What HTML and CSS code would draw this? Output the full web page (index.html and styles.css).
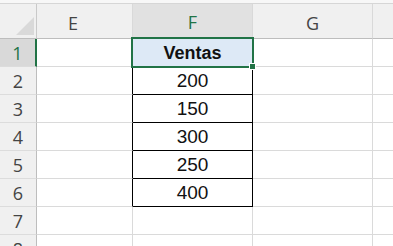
FILE: index.html
```html
<!DOCTYPE html>
<html lang="es">
<head>
<meta charset="utf-8">
<title>Hoja</title>
<link rel="stylesheet" href="styles.css">
</head>
<body>
<div class="sheet">
  <div class="topstrip"></div>

  <div class="corner"><span class="tri"></span></div>
  <div class="colhead colhead-e">E</div>
  <div class="colhead sel">F</div>
  <div class="colhead">G</div>
  <div class="colhead rest"></div>

  <div class="rowhead sel">1</div>
  <div class="cell"></div>
  <div class="cell active"><span class="bold">Ventas</span><span class="handle"></span></div>
  <div class="cell"></div>
  <div class="cell rest"></div>

  <div class="rowhead">2</div>
  <div class="cell edge"></div>
  <div class="cell data">200</div>
  <div class="cell"></div>
  <div class="cell rest"></div>

  <div class="rowhead">3</div>
  <div class="cell edge"></div>
  <div class="cell data">150</div>
  <div class="cell"></div>
  <div class="cell rest"></div>

  <div class="rowhead">4</div>
  <div class="cell edge"></div>
  <div class="cell data">300</div>
  <div class="cell"></div>
  <div class="cell rest"></div>

  <div class="rowhead">5</div>
  <div class="cell edge"></div>
  <div class="cell data">250</div>
  <div class="cell"></div>
  <div class="cell rest"></div>

  <div class="rowhead">6</div>
  <div class="cell edge"></div>
  <div class="cell data">400</div>
  <div class="cell"></div>
  <div class="cell rest"></div>

  <div class="rowhead">7</div>
  <div class="cell"></div>
  <div class="cell"></div>
  <div class="cell"></div>
  <div class="cell rest"></div>

  <div class="rowhead">8</div>
  <div class="cell"></div>
  <div class="cell"></div>
  <div class="cell"></div>
  <div class="cell rest"></div>
</div>
</body>
</html>
```
FILE: styles.css
```css
html, body {
  margin: 0;
  padding: 0;
  background: #ffffff;
  overflow: hidden;
}

.sheet {
  width: 393px;
  height: 246px;
  overflow: hidden;
  display: grid;
  grid-template-columns: 37px 96px 120px 120px 1fr;
  grid-template-rows: 4px 35px repeat(8, 28px);
  font-family: "Liberation Sans", Arial, sans-serif;
}

.topstrip {
  grid-column: 1 / -1;
  background: #f7f7f7;
  border-bottom: 1px solid #d6d6d6;
  box-sizing: border-box;
}

.corner {
  background: #f0f0f0;
  border-right: 1px solid #c9c9c9;
  border-bottom: 1px solid #bdbdbd;
  box-sizing: border-box;
  display: flex;
  justify-content: flex-end;
  align-items: flex-end;
  padding: 0 2px 3px 0;
}

.tri {
  width: 0;
  height: 0;
  border-left: 18px solid transparent;
  border-bottom: 18px solid #d9d9d9;
}

.colhead {
  background: #f0f0f0;
  border-right: 1px solid #d9d9d9;
  border-bottom: 1px solid #bdbdbd;
  box-sizing: border-box;
  display: flex;
  justify-content: center;
  align-items: flex-end;
  padding-bottom: 5px;
  font-family: "Open Sans", "Noto Sans", sans-serif;
  font-size: 18px;
  line-height: 20px;
  color: #444444;
}

.colhead-e {
  justify-content: flex-start;
  padding-left: 31px;
}

.colhead.sel {
  background: #e1e1e1;
  color: #217346;
  border-bottom: 2px solid #217346;
}

.colhead.rest {
  border-right: none;
}

.rowhead {
  background: #f0f0f0;
  border-right: 1px solid #bdbdbd;
  border-bottom: 1px solid #dcdcdc;
  box-sizing: border-box;
  display: flex;
  justify-content: center;
  align-items: center;
  font-family: "Open Sans", "Noto Sans", sans-serif;
  font-size: 18px;
  color: #444444;
  padding-top: 1px;
}

.rowhead.sel {
  background: #d9d9d9;
  color: #217346;
  border-right: 2px solid #217346;
}

.cell {
  border-right: 1px solid #dadada;
  border-bottom: 1px solid #dadada;
  box-sizing: border-box;
  display: flex;
  justify-content: center;
  align-items: center;
  font-size: 19px;
  color: #111111;
  padding-top: 1px;
}

.cell.rest {
  border-right: none;
}

.cell.edge {
  border-right-color: #000000;
}

.cell.data {
  border-right-color: #000000;
  border-bottom-color: #000000;
}

.cell.active {
  position: relative;
  background: #dde9f6;
  border-right-color: #000000;
  border-bottom-color: #000000;
  font-size: 18px;
}

.cell.active::after {
  content: "";
  position: absolute;
  left: -2px;
  top: -2px;
  right: -2px;
  bottom: -2px;
  border: 2px solid #217346;
  pointer-events: none;
}

.bold {
  font-weight: 700;
}

.handle {
  position: absolute;
  right: -4px;
  bottom: -4px;
  width: 5px;
  height: 5px;
  background: #217346;
  border: 1px solid #ffffff;
  z-index: 2;
}
```
